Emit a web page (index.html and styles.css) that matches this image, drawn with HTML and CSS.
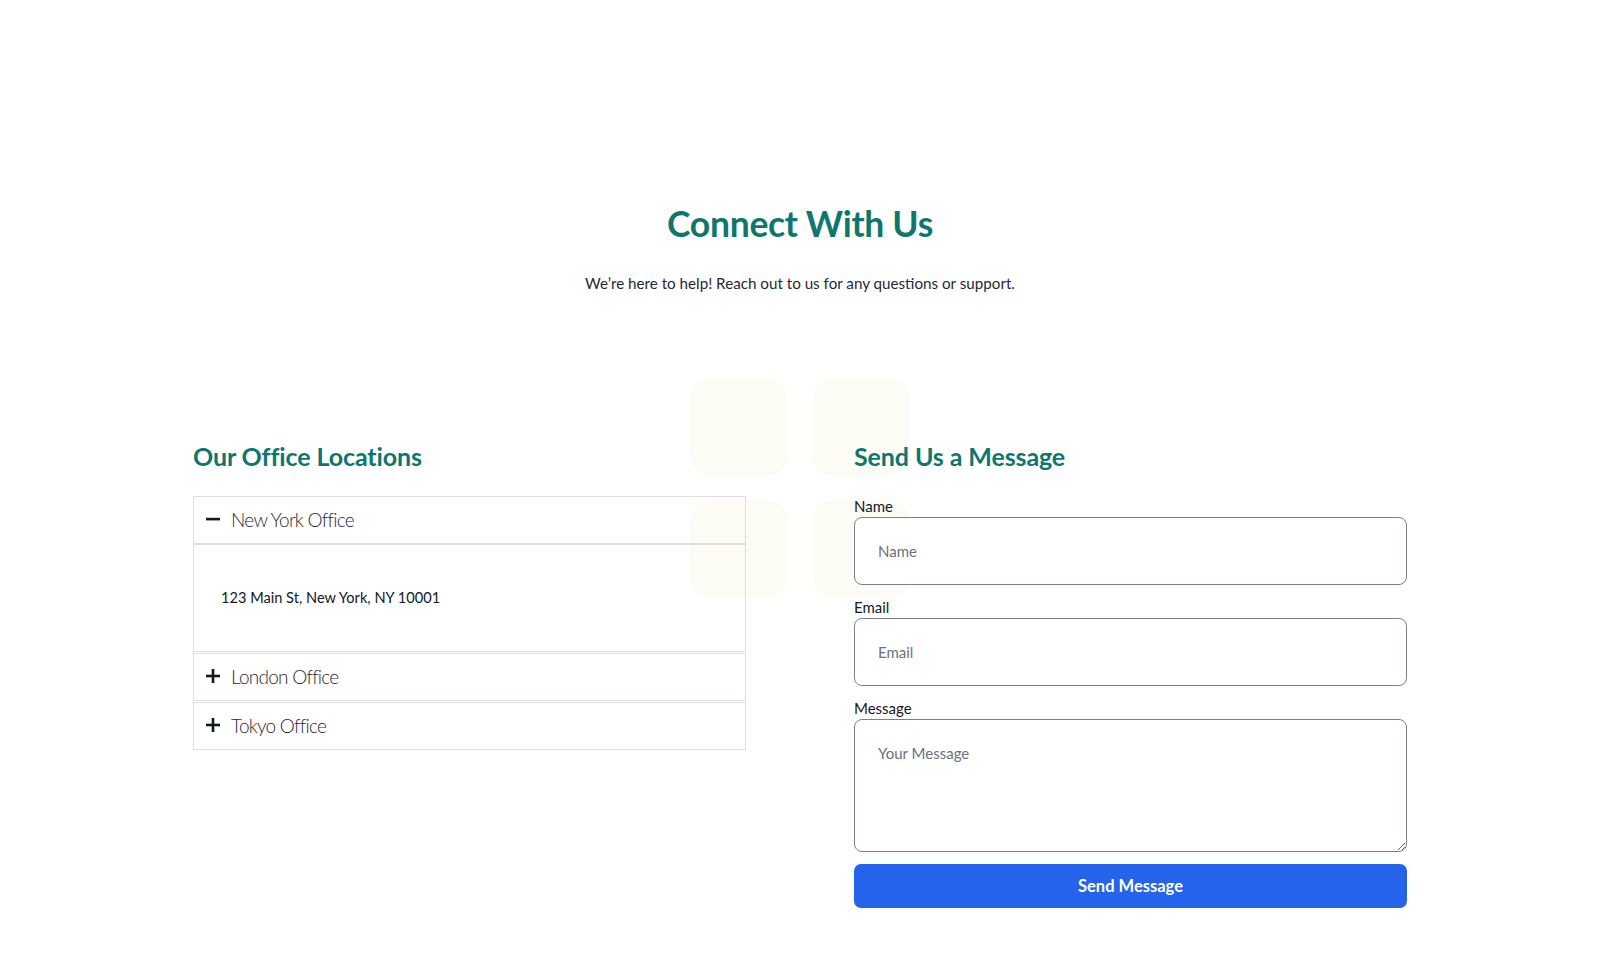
FILE: index.html
```html
<!DOCTYPE html>
<html lang="en">
<head>
<meta charset="utf-8">
<title>Connect With Us</title>
<link rel="stylesheet" href="styles.css">
</head>
<body>
<main class="page">
  <div class="deco" aria-hidden="true">
    <span></span><span></span><span></span><span></span>
  </div>
  <header class="intro">
    <h1 class="title">Connect With Us</h1>
    <p class="subtitle">We’re here to help! Reach out to us for any questions or support.</p>
  </header>
  <section class="columns">
    <div class="col">
      <h2 class="col-title">Our Office Locations</h2>
      <div class="accordion">
        <div class="acc-item open">
          <div class="acc-head">
            <svg class="acc-icon" viewBox="0 0 14 14"><rect x="0" y="5.8" width="14" height="2.6" fill="#111827"/></svg>
            <span>New York Office</span>
          </div>
          <div class="acc-body">123 Main St, New York, NY 10001</div>
        </div>
        <div class="acc-item">
          <div class="acc-head">
            <svg class="acc-icon" viewBox="0 0 14 14"><rect x="0" y="5.7" width="14" height="2.6" fill="#111827"/><rect x="5.7" y="0" width="2.6" height="14" fill="#111827"/></svg>
            <span>London Office</span>
          </div>
        </div>
        <div class="acc-item">
          <div class="acc-head">
            <svg class="acc-icon" viewBox="0 0 14 14"><rect x="0" y="5.7" width="14" height="2.6" fill="#111827"/><rect x="5.7" y="0" width="2.6" height="14" fill="#111827"/></svg>
            <span>Tokyo Office</span>
          </div>
        </div>
      </div>
    </div>
    <div class="col">
      <h2 class="col-title">Send Us a Message</h2>
      <form class="form">
        <div class="field">
          <label class="label" for="name">Name</label>
          <input class="input" id="name" type="text" placeholder="Name">
        </div>
        <div class="field">
          <label class="label" for="email">Email</label>
          <input class="input" id="email" type="email" placeholder="Email">
        </div>
        <div class="field">
          <label class="label" for="msg">Message</label>
          <textarea class="input textarea" id="msg" placeholder="Your Message"></textarea>
        </div>
        <button class="btn" type="button">Send Message</button>
      </form>
    </div>
  </section>
</main>
</body>
</html>
```

FILE: styles.css
```css
* { box-sizing: border-box; }
html, body { margin: 0; padding: 0; background: #ffffff; }
body {
  font-family: "Lato", "Noto Sans", sans-serif;
  color: #1f2937;
}
.page {
  position: relative;
  width: 1214px;
  margin: 0 auto;
  padding-top: 204px;
}
.deco {
  position: absolute;
  top: 378px;
  left: 50%;
  margin-left: -110px;
  display: grid;
  grid-template-columns: 98px 98px;
  grid-auto-rows: 98px;
  gap: 24px;
  z-index: 0;
}
.deco span {
  background: #fcfbf4;
  border-radius: 22px;
}
.intro { position: relative; z-index: 1; text-align: center; }
.title {
  margin: 0;
  font-size: 35.5px;
  line-height: 40px;
  font-weight: 700;
  letter-spacing: -0.3px;
  color: #0f766e;
}
.subtitle {
  margin: 27px 0 0;
  font-size: 15.2px;
  line-height: 24px;
  color: #1f2937;
}
.columns {
  position: relative;
  z-index: 1;
  margin-top: 145px;
  display: grid;
  grid-template-columns: 553px 553px;
  column-gap: 108px;
}
.col-title {
  margin: 0 0 24px;
  font-size: 25px;
  line-height: 32px;
  font-weight: 700;
  letter-spacing: -0.1px;
  color: #0f766e;
}
.accordion { display: flex; flex-direction: column; }
.acc-item { border: 1px solid #dcdfe4; }
.acc-item + .acc-item { margin-top: 1px; }
.acc-head {
  display: flex;
  align-items: center;
  gap: 11px;
  height: 46px;
  padding: 0 12px 2px;
  font-size: 19px;
  font-weight: 300;
  letter-spacing: -0.75px;
  color: #1f2937;
}
.acc-icon { width: 14px; height: 14px; flex: none; }
.acc-body {
  border-top: 2px solid #dcdfe4;
  padding: 43px 27px 0;
  height: 108px;
  font-size: 14.6px;
  line-height: 20px;
  color: #111827;
}
.form { display: flex; flex-direction: column; gap: 12px; }
.field { display: flex; flex-direction: column; }
.label {
  font-size: 15px;
  line-height: 20px;
  margin-bottom: 1px;
  color: #111827;
}
.input {
  display: block;
  width: 100%;
  height: 68px;
  padding: 0 23px;
  border: 1px solid #7b808a;
  border-radius: 8px;
  font-family: inherit;
  font-size: 15px;
  color: #111827;
  background: #ffffff;
  outline: none;
}
.input::placeholder { color: #6b7280; }
.textarea {
  height: 133px;
  padding: 23px 23px;
  line-height: 20px;
  resize: vertical;
}
.btn {
  height: 44px;
  border: none;
  border-radius: 7px;
  background: #2563eb;
  color: #ffffff;
  font-family: inherit;
  font-size: 16.5px;
  font-weight: 700;
}
```
